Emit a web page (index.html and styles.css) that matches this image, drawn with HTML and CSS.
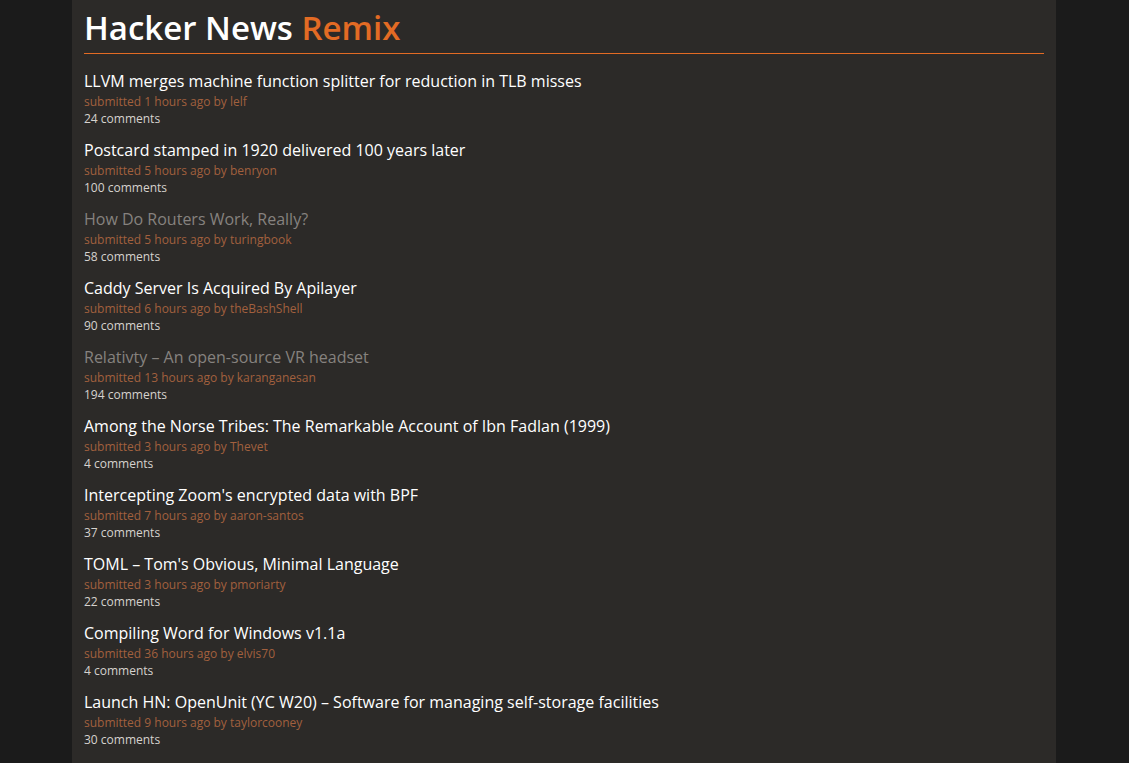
FILE: index.html
```html
<!DOCTYPE html>
<html lang="en">
<head>
<meta charset="utf-8">
<title>Hacker News Remix</title>
<link rel="stylesheet" href="styles.css">
</head>
<body>
<main class="page">
  <header class="masthead">
    <h1 class="brand">Hacker News <span class="brand-accent">Remix</span></h1>
  </header>
  <ul class="stories">
    <li class="story">
      <a class="story-title" href="#">LLVM merges machine function splitter for reduction in TLB misses</a>
      <div class="story-meta">submitted 1 hours ago by lelf</div>
      <a class="story-comments" href="#">24 comments</a>
    </li>
    <li class="story">
      <a class="story-title" href="#">Postcard stamped in 1920 delivered 100 years later</a>
      <div class="story-meta">submitted 5 hours ago by benryon</div>
      <a class="story-comments" href="#">100 comments</a>
    </li>
    <li class="story">
      <a class="story-title is-visited" href="#">How Do Routers Work, Really?</a>
      <div class="story-meta">submitted 5 hours ago by turingbook</div>
      <a class="story-comments" href="#">58 comments</a>
    </li>
    <li class="story">
      <a class="story-title" href="#">Caddy Server Is Acquired By Apilayer</a>
      <div class="story-meta">submitted 6 hours ago by theBashShell</div>
      <a class="story-comments" href="#">90 comments</a>
    </li>
    <li class="story">
      <a class="story-title is-visited" href="#">Relativty – An open-source VR headset</a>
      <div class="story-meta">submitted 13 hours ago by karanganesan</div>
      <a class="story-comments" href="#">194 comments</a>
    </li>
    <li class="story">
      <a class="story-title" href="#">Among the Norse Tribes: The Remarkable Account of Ibn Fadlan (1999)</a>
      <div class="story-meta">submitted 3 hours ago by Thevet</div>
      <a class="story-comments" href="#">4 comments</a>
    </li>
    <li class="story">
      <a class="story-title" href="#">Intercepting Zoom's encrypted data with BPF</a>
      <div class="story-meta">submitted 7 hours ago by aaron-santos</div>
      <a class="story-comments" href="#">37 comments</a>
    </li>
    <li class="story">
      <a class="story-title" href="#">TOML – Tom's Obvious, Minimal Language</a>
      <div class="story-meta">submitted 3 hours ago by pmoriarty</div>
      <a class="story-comments" href="#">22 comments</a>
    </li>
    <li class="story">
      <a class="story-title" href="#">Compiling Word for Windows v1.1a</a>
      <div class="story-meta">submitted 36 hours ago by elvis70</div>
      <a class="story-comments" href="#">4 comments</a>
    </li>
    <li class="story">
      <a class="story-title" href="#">Launch HN: OpenUnit (YC W20) – Software for managing self-storage facilities</a>
      <div class="story-meta">submitted 9 hours ago by taylorcooney</div>
      <a class="story-comments" href="#">30 comments</a>
    </li>
  </ul>
</main>
</body>
</html>
```

FILE: styles.css
```css
* { box-sizing: border-box; }

html, body {
  margin: 0;
  padding: 0;
  background: #1b1b1b;
}

body {
  font-family: "Open Sans", "Noto Sans", sans-serif;
  color: #f2f0ee;
}

.page {
  width: 984px;
  margin: 0 auto 0 72px;
  min-height: 100vh;
  background: #2c2a28;
  padding: 0 12px 16px;
}

.masthead {
  padding-top: 8px;
  padding-bottom: 5px;
  border-bottom: 1px solid #e36b24;
}

.brand {
  margin: 0;
  font-size: 33px;
  line-height: 40px;
  font-weight: 600;
  color: #ffffff;
  letter-spacing: 0;
}

.brand-accent {
  color: #e36b24;
}

.stories {
  list-style: none;
  margin: 0;
  padding: 15px 0 0;
  display: flex;
  flex-direction: column;
  gap: 11px;
}

.story {
  display: flex;
  flex-direction: column;
  align-items: flex-start;
}

.story-title {
  font-size: 16px;
  line-height: 24px;
  color: #ffffff;
  text-decoration: none;
  font-weight: 500;
}

.story-title.is-visited {
  color: #86827f;
}

.story-meta {
  font-size: 12px;
  line-height: 17px;
  color: #a2603e;
}

.story-comments {
  font-size: 12px;
  line-height: 17px;
  color: #d6d2ce;
  text-decoration: none;
}
```
